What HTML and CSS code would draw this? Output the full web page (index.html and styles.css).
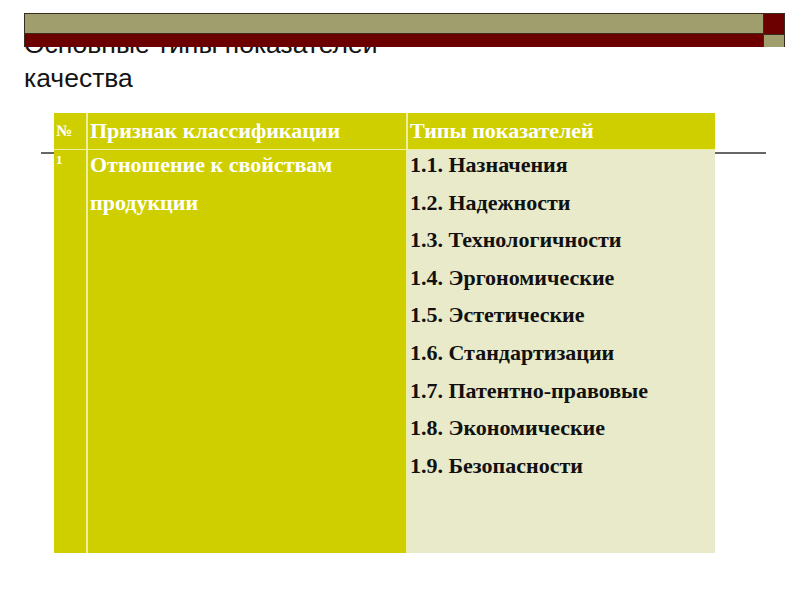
FILE: index.html
```html
<!DOCTYPE html>
<html lang="ru">
<head>
<meta charset="utf-8">
<title>Основные типы показателей качества</title>
<link rel="stylesheet" href="styles.css">
</head>
<body>
<div class="slide">
  <div class="topbar">
    <div class="bar-khaki"></div>
    <div class="bar-red-top"></div>
    <div class="bar-red"></div>
    <div class="bar-square"></div>
  </div>
  <h1 class="title">Основные типы показателей<br>качества</h1>
  <div class="rule"></div>
  <table class="tbl">
    <colgroup>
      <col class="c1"><col class="c2"><col class="c3">
    </colgroup>
    <thead>
      <tr>
        <th class="num">№</th>
        <th>Признак классификации</th>
        <th>Типы показателей</th>
      </tr>
    </thead>
    <tbody>
      <tr>
        <td class="num">1</td>
        <td class="sign"><p>Отношение к свойствам продукции</p></td>
        <td class="types">
          <p>1.1. Назначения</p>
          <p>1.2. Надежности</p>
          <p>1.3. Технологичности</p>
          <p>1.4. Эргономические</p>
          <p>1.5. Эстетические</p>
          <p>1.6. Стандартизации</p>
          <p>1.7. Патентно-правовые</p>
          <p>1.8. Экономические</p>
          <p>1.9. Безопасности</p>
        </td>
      </tr>
    </tbody>
  </table>
</div>
</body>
</html>
```

FILE: styles.css
```css
html, body {
  margin: 0;
  padding: 0;
  background: #ffffff;
}
.slide {
  position: relative;
  width: 800px;
  height: 600px;
  overflow: hidden;
}
.topbar {
  position: relative;
  z-index: 2;
  margin: 13px 15px 0 24px;
  display: grid;
  grid-template-columns: 1fr 21px;
  grid-template-rows: 20px 13px;
  border: 1px solid #3a2a20;
  box-sizing: border-box;
  height: 34px;
}
.bar-khaki { background: #a09e6c; border-bottom: 1px solid #3a2a20; }
.bar-red-top { background: #6c0000; border-left: 1px solid #3a2a20; }
.bar-red { background: #6c0000; }
.bar-square { background: #a09e6c; border-left: 1px solid #3a2a20; border-top: 1px solid #3a2a20; }

.title {
  position: relative;
  z-index: 1;
  margin: -20px 0 0 24px;
  font-family: "Liberation Sans", Arial, sans-serif;
  font-weight: normal;
  font-size: 26.5px;
  line-height: 34px;
  color: #141414;
}
.rule {
  position: absolute;
  left: 41px;
  top: 152px;
  width: 725px;
  height: 2px;
  background: #666666;
  z-index: 0;
}
.tbl {
  position: relative;
  z-index: 1;
  margin: 18px 0 0 54px;
  border-collapse: collapse;
  table-layout: fixed;
  width: 661px;
  font-family: "Liberation Serif", "Times New Roman", serif;
  font-weight: bold;
}
.c1 { width: 33px; }
.c2 { width: 320px; }
.c3 { width: 308px; }
.tbl th {
  background: #cfcf00;
  color: #ffffff;
  font-size: 22px;
  text-align: left;
  height: 34px;
  padding: 0 2px;
  line-height: 34px;
  vertical-align: middle;
  border-left: 2px solid #eef0a0;
  border-bottom: 1px solid #eef0a0;
}
.tbl th:first-child, .tbl td:first-child { border-left: none; }
.tbl td {
  height: 401px;
  vertical-align: top;
  padding: 0 2px;
  border-left: 2px solid #eef0a0;
  font-size: 22px;
}
.tbl .num {
  color: #ffffff;
  padding-left: 2px;
}
.tbl th.num { font-size: 16px; line-height: 36px; }
.tbl td.num {
  background: #cfcf00;
  font-size: 13px;
  line-height: 16px;
  padding-top: 2px;
}
.sign {
  background: #cfcf00;
  color: #ffffff;
}
.sign p {
  margin: -4px 0 0;
  line-height: 37.6px;
}
.types {
  background: #e8eac9;
  color: #111111;
}
.types p {
  margin: 0;
  line-height: 37.6px;
}
.types p:first-child { margin-top: -4px; }
```
